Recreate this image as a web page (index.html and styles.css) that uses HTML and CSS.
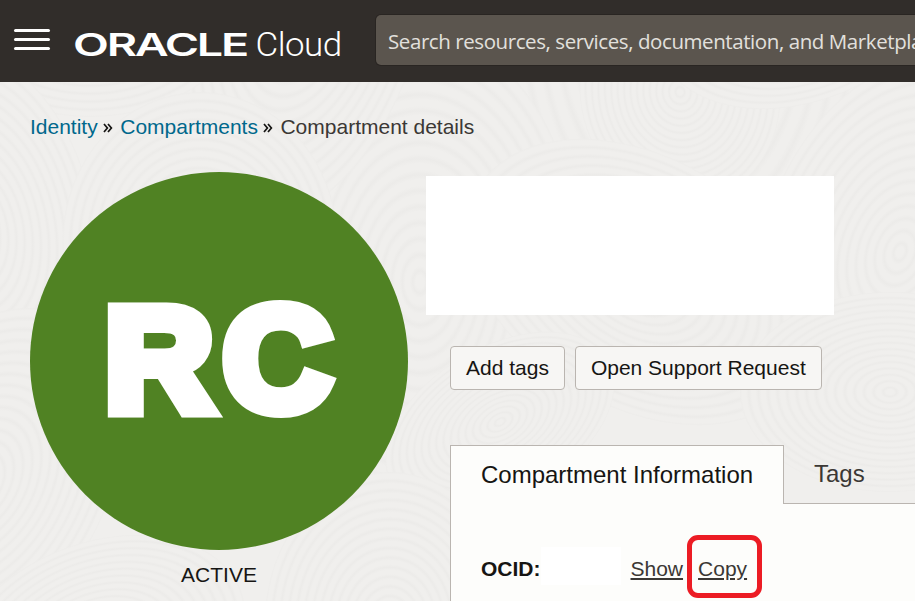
FILE: index.html
```html
<!DOCTYPE html>
<html lang="en">
<head>
<meta charset="utf-8">
<title>Compartment details</title>
<link rel="stylesheet" href="styles.css">
</head>
<body>
<svg class="texture" width="915" height="519" viewBox="0 0 915 519" aria-hidden="true">
  <defs>
    <radialGradient id="rings" gradientUnits="userSpaceOnUse" cx="0" cy="0" r="8" spreadMethod="repeat">
      <stop offset="0" stop-color="#f0efed"/>
      <stop offset=".4" stop-color="#f0efed"/>
      <stop offset=".7" stop-color="#ecebe9"/>
      <stop offset="1" stop-color="#f0efed"/>
    </radialGradient>
    <ellipse id="swirl" rx="125" ry="125" fill="url(#rings)"/>
  </defs>
  <use href="#swirl" transform="translate(680 -60) scale(2 3)"/>
  <use href="#swirl" transform="translate(420 200) scale(1.3 2)"/>
  <use href="#swirl" transform="translate(900 170) rotate(20) scale(1.1 1.6)"/>
  <use href="#swirl" transform="translate(300 -80) rotate(15) scale(1 1.8)"/>
  <use href="#swirl" transform="translate(90 -90) scale(1.3 1)"/>
  <use href="#swirl" transform="translate(-30 150) rotate(-10) scale(1 1.5)"/>
  <use href="#swirl" transform="translate(200 160) scale(1.1 1.2)"/>
  <use href="#swirl" transform="translate(680 10) rotate(-10) scale(.8 .9)"/>
  <use href="#swirl" transform="translate(800 -80) rotate(-20) scale(1.2 .8)"/>
  <use href="#swirl" transform="translate(-20 400) rotate(30) scale(1 1.5)"/>
  <use href="#swirl" transform="translate(640 200) rotate(30) scale(1.5 1)"/>
  <use href="#swirl" transform="translate(890 310) scale(1.2 .8)"/>
  <use href="#swirl" transform="translate(500 340) rotate(-30) scale(1 .6)"/>
  <use href="#swirl" transform="translate(100 560) rotate(-20) scale(1.2 .8)"/>
  <use href="#swirl" transform="translate(390 540) scale(1 1.2)"/>
</svg>
<header class="topbar">
  <div class="menu"><span></span><span></span><span></span></div>
  <svg class="logo" width="270" height="40" viewBox="0 0 270 40" role="img" aria-label="Oracle Cloud">
    <text class="brand" x="-2" y="33.5" textLength="174" lengthAdjust="spacingAndGlyphs">ORACLE</text>
    <text class="product" x="180.500" y="33.500" textLength="86" lengthAdjust="spacingAndGlyphs">Cloud</text>
  </svg>
  <div class="search">Search resources, services, documentation, and Marketplace</div>
</header>
<main class="page">
  <nav class="crumbs">
    <a>Identity</a>
    <svg class="chev" width="10" height="10" viewBox="0 0 10 10"><path d="M1 1 4.400 5 1 9M5 1 8.400 5 5 9"/></svg>
    <a>Compartments</a>
    <svg class="chev" width="10" height="10" viewBox="0 0 10 10"><path d="M1 1 4.400 5 1 9M5 1 8.400 5 5 9"/></svg>
    <span>Compartment details</span>
  </nav>
  <div class="content">
    <aside class="side">
      <svg class="avatar" width="378" height="378" viewBox="0 0 378 378">
        <circle cx="189" cy="189" r="189"/>
        <text transform="translate(75 237.500) scale(1.025 1)" x="0 115.500" y="0">RC</text>
      </svg>
      <div class="status">ACTIVE</div>
    </aside>
    <section class="detail">
      <div class="blank"></div>
      <div class="actions">
        <button>Add tags</button>
        <button>Open Support Request</button>
      </div>
      <div class="tabs">
        <div class="tab active">Compartment Information</div>
        <div class="tab">Tags</div>
      </div>
      <div class="panel">
        <b>OCID:</b><i class="mask"></i><a class="show">Show</a><a class="copy">Copy</a>
      </div>
    </section>
  </div>
</main>
</body>
</html>
```
FILE: styles.css
```css
* { box-sizing: border-box; }
body {
  margin: 0;
  width: 915px;
  height: 601px;
  overflow: hidden;
  position: relative;
  background: #f0efed;
  color: #161513;
  font: 21px/26px "Liberation Sans", Arial, sans-serif;
}
.texture { position: absolute; top: 82px; left: 0; z-index: -1; }
.topbar {
  height: 82px;
  background: #312d2a;
  display: flex;
  overflow: hidden;
}
.menu {
  margin: 29px 0 0 14px;
  width: 36px;
  display: flex;
  flex-direction: column;
  gap: 6px;
  flex: none;
}
.menu span { height: 3px; background: #fff; border-radius: 1.5px; }
.logo { margin: 22px 0 0 25px; flex: none; overflow: visible; fill: #fff; }
.brand { font: 600 31px Inter, sans-serif; letter-spacing: -1.5px; }
.product { font: 300 33px Roboto, sans-serif; letter-spacing: -.5px; }
.search {
  flex: none;
  width: 620px;
  height: 50px;
  margin: 15px 0 0 31px;
  padding-left: 12px;
  border-radius: 5px;
  background: #5b554e;
  box-shadow: 0 0 0 1px #292522;
  color: #e2e0dd;
  font: 20.5px/53px "Open Sans", "Noto Sans", sans-serif;
  letter-spacing: -.42px;
  white-space: nowrap;
}
.crumbs {
  display: flex;
  align-items: center;
  height: 26px;
  margin: 32px 0 0 30px;
  color: #3b3835;
  white-space: nowrap;
}
.crumbs a { color: #00688c; }
.chev { margin: 2px 7.5px 0 5px; fill: none; stroke: #161513; stroke-width: 1.7; }
.content { display: flex; padding-left: 30px; }
.side { width: 396px; flex: none; padding-top: 32px; }
.avatar { display: block; }
.avatar circle { fill: #508223; }
.avatar text {
  font: bold 146px "Liberation Sans", Arial, sans-serif;
  fill: #fff;
  stroke: #fff;
  stroke-width: 14px;
}
.status { width: 378px; margin-top: 12px; text-align: center; }
.detail { width: 489px; flex: none; padding-top: 36px; }
.blank { width: 408px; height: 139px; background: #fff; }
.actions { display: flex; gap: 10px; margin: 31px 0 0 24px; }
.actions button {
  height: 44px;
  padding: 0 15px;
  border: 1px solid #bab5b0;
  border-radius: 4px;
  background: #f7f6f4;
  color: #161513;
  font: inherit;
  white-space: nowrap;
}
.tabs { display: flex; margin: 55px 0 0 24px; height: 59px; font-size: 24px; }
.tab {
  flex: 1;
  padding: 16px 0 0 30px;
  border-bottom: 1px solid #bab5b0;
  color: #3b3835;
  white-space: nowrap;
}
.tab.active {
  flex: 0 0 334px;
  border: 1px solid #bab5b0;
  border-bottom: 0;
  background: #fdfdfb;
  color: #161513;
}
.panel {
  display: flex;
  align-items: flex-start;
  height: 97px;
  margin-left: 24px;
  padding: 31px 0 0 30px;
  border-left: 1px solid #bab5b0;
  background: #fdfdfb;
}
.panel b, .show { padding-top: 21px; }
.mask { width: 80px; height: 38px; margin-top: 12px; background: #fff; }
.show, .copy { color: #3b3835; text-decoration: underline; }
.show { margin-left: 10px; }
.copy {
  width: 75px;
  height: 63px;
  margin-left: 4px;
  padding: 16px 0 0 6px;
  border: 5px solid #ec1c24;
  border-radius: 11px;
}
```
